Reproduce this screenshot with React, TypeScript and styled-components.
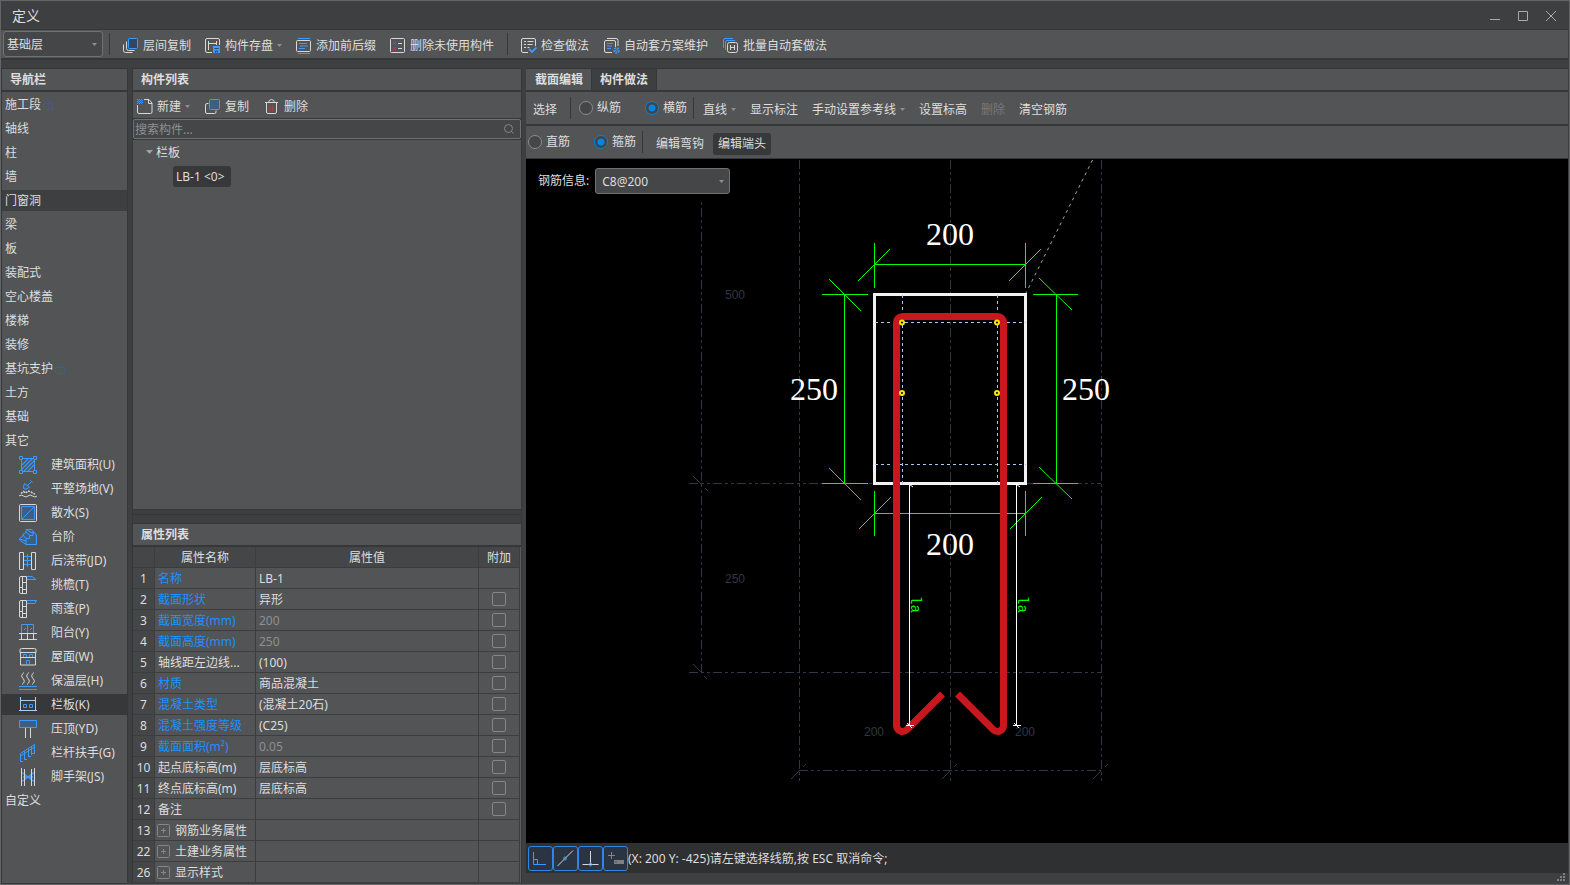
import React, { useState } from 'react';
import styled, { createGlobalStyle, css } from 'styled-components';

const color = {
  frame: '#636465',
  chrome: '#3e3f41',
  panel: '#525456',
  line: '#363739',
  cellLine: '#3c3d3f',
  head: '#454648',
  text: '#dedede',
  dim: '#8f9091',
  off: '#77787a',
  blue: '#1e90ff',
  icon: '#3d9bff',
  pale: '#d8d8d8',
  edge: '#707172',
  dark: '#37383a',
  grid: '#2f3845',
  green: '#00ff00',
  rebar: '#c8181e',
};

const GlobalStyle = createGlobalStyle`
  *, *::before, *::after { box-sizing: border-box; }
  body { margin: 0; background: ${color.chrome}; }
  body, button, input, select, table {
    font-family: "Noto Sans", "Noto Sans CJK SC", sans-serif;
    font-size: 12px;
    line-height: 16px;
    color: ${color.text};
  }
  button, input, select { margin: 0; }
`;

/* ---------- window frame ---------- */

const Window = styled.div`
  display: flex;
  flex-direction: column;
  height: 100vh;
  min-height: 820px;
  border: 1px solid ${color.frame};
  background: ${color.chrome};
`;

const TitleBar = styled.header`
  display: flex;
  justify-content: space-between;
  align-items: center;
  height: 29px;
  flex: none;
  padding: 2px 10px 0 11px;
  border-bottom: 1px solid ${color.line};
`;

const Title = styled.h1`
  margin: 0;
  font-size: 14px;
  line-height: 20px;
  font-weight: 400;
`;

const WindowButtons = styled.div`
  display: flex;
  gap: 12px;
`;

const WindowButton = styled.button`
  display: grid;
  place-items: center;
  width: 16px;
  height: 16px;
  padding: 0;
  border: 0;
  background: none;
`;

const barFace = css`
  display: flex;
  align-items: center;
  flex: none;
  background: ${color.panel};
  border-bottom: 2px solid ${color.line};
`;

const MainToolbar = styled.div`
  ${barFace}
  height: 30px;
  padding: 0 2px;
  margin-right: 1px;
`;

const Workspace = styled.main`
  flex: 1;
  min-height: 0;
  display: flex;
  padding: 8px 0 0 1px;
`;

const PanelHeader = styled.h2`
  ${barFace}
  height: 24px;
  margin: 0;
  padding: 0 8px;
  border-top: 1px solid ${color.line};
  font-size: 12px;
  font-weight: 700;
`;

/* ---------- controls ---------- */

const ToolGroup = styled.div<{ $gap?: number }>`
  display: flex;
  flex: none;
  gap: ${(p) => p.$gap || 0}px;
  padding-top: 4px;
`;

const Tool = styled.button<{ $pressed?: boolean }>`
  display: inline-flex;
  align-items: center;
  gap: 4px;
  flex: none;
  height: 22px;
  padding: 0 ${(p) => (p.$pressed ? 5 : 7)}px;
  border: 0;
  border-radius: 3px;
  white-space: nowrap;
  background: ${(p) => (p.$pressed ? color.dark : 'transparent')};
  &:disabled { color: ${color.off}; }
  svg { flex: none; }
`;

const Divider = styled.span<{ $tight?: boolean }>`
  flex: none;
  width: 1px;
  height: 22px;
  margin: 0 ${(p) => (p.$tight ? 2 : 6)}px 0 6px;
  background: ${color.dark};
`;

const SelectBox = styled.span<{ $width: number }>`
  position: relative;
  display: inline-flex;
  flex: none;
  width: ${(p) => p.$width}px;
  select {
    appearance: none;
    width: 100%;
    height: 26px;
    padding: 1px 20px 0 ${(p) => (p.$width > 110 ? 6 : 3)}px;
    border: 1px solid ${color.edge};
    border-radius: 3px;
    background: ${color.head};
  }
  svg {
    position: absolute;
    right: 6px;
    top: 12px;
    pointer-events: none;
  }
`;

const RadioGroup = styled.div`
  display: flex;
  flex: none;
  padding-left: 2px;
`;

const RadioLabel = styled.label`
  display: flex;
  align-items: center;
  gap: 4px;
  width: 66px;
  flex: none;
  padding-bottom: 1px;
  white-space: nowrap;
  &:last-child { width: auto; }
`;

const Radio = styled.input`
  appearance: none;
  width: 14px;
  height: 14px;
  border: 1px solid #8a8b8c;
  border-radius: 50%;
  background: ${color.head};
  &:checked {
    border-color: #0d7fd4;
    background: radial-gradient(circle, #0a84dc 3px, #3f4448 4px);
  }
`;

const Check = styled.input`
  appearance: none;
  display: block;
  width: 14px;
  height: 14px;
  margin: 0 auto;
  border: 1px solid #858687;
  border-radius: 2px;
  &:checked { background: ${color.blue}; }
`;

/* ---------- navigation ---------- */

const NavPanel = styled.nav`
  display: flex;
  flex-direction: column;
  width: 125px;
  flex: none;
  margin-bottom: 1px;
  background: ${color.panel};
  box-shadow: 1px 0 0 ${color.line}, -1px 0 0 ${color.line}, 0 1px 0 ${color.line};
`;

const NavList = styled.ul`
  display: flex;
  flex-direction: column;
  gap: 3px;
  margin: 0;
  padding: 2px 0 0;
  list-style: none;
`;

const NavItem = styled.button<{ $child?: boolean; $tone?: string }>`
  display: flex;
  align-items: center;
  gap: ${(p) => (p.$child ? 14 : 2)}px;
  width: 100%;
  height: 21px;
  padding: 0 0 0 ${(p) => (p.$child ? 17 : 3)}px;
  border: 0;
  white-space: nowrap;
  text-align: left;
  background: ${(p) => p.$tone || 'transparent'};
  svg { flex: none; }
`;

/* ---------- component list and properties ---------- */

const MiddleColumn = styled.div`
  display: flex;
  flex-direction: column;
  width: 388px;
  flex: none;
  margin: 0 5px 0 6px;
  box-shadow: 1px 0 0 ${color.line}, -1px 0 0 ${color.line};
`;

const ListToolbar = styled.div`
  display: flex;
  align-items: center;
  flex: none;
  height: 27px;
  border-bottom: 1px solid ${color.line};
  background: ${color.panel};
  button:first-child { padding-left: 4px; }
`;

const SearchBox = styled.label`
  position: relative;
  display: block;
  flex: none;
  input {
    display: block;
    width: 100%;
    height: 20px;
    padding: 0 24px 0 1px;
    border: 1px solid ${color.edge};
    border-radius: 2px;
    background: ${color.head};
    &::placeholder { color: ${color.dim}; opacity: 1; }
  }
  svg {
    position: absolute;
    right: 6px;
    top: 4px;
  }
`;

const Tree = styled.ul`
  flex: 1;
  min-height: 40px;
  margin: 0 0 4px;
  padding: 2px 0 0 13px;
  list-style: none;
  border-top: 1px solid ${color.line};
  border-bottom: 1px solid ${color.line};
  background: ${color.panel};
  ul { margin: 3px 0 0; padding: 0 0 0 27px; list-style: none; }
`;

const TreeRow = styled.button<{ $selected?: boolean }>`
  display: flex;
  align-items: center;
  gap: 2px;
  height: 21px;
  padding: ${(p) => (p.$selected ? '0 6px 0 3px' : '0')};
  border: 0;
  border-radius: 3px;
  white-space: nowrap;
  background: ${(p) => (p.$selected ? color.dark : 'transparent')};
`;

const Properties = styled.section`
  flex: none;
  padding: 8px 0 1px;
  border-top: 1px solid ${color.line};
`;

const PropTable = styled.table`
  width: 100%;
  table-layout: fixed;
  border-spacing: 0;
  background: ${color.panel};
  border-right: 1px solid #5c5d5e;
  th, td {
    height: 21px;
    padding: 2px 3px 0;
    border: solid ${color.cellLine};
    border-width: 0 1px 1px 0;
    font-weight: 400;
    text-align: left;
    white-space: nowrap;
    overflow: hidden;
    text-overflow: ellipsis;
  }
  td:last-child { padding: 0; }
  thead th, tbody th { background: ${color.head}; text-align: center; padding: 2px 0 0; }
`;

const NameCell = styled.td<{ $blue?: boolean }>`
  color: ${(p) => (p.$blue ? color.blue : color.text)};
`;

const ValueCell = styled.td<{ $dim?: boolean }>`
  color: ${(p) => (p.$dim ? color.dim : color.text)};
`;

const Expander = styled.button`
  display: flex;
  align-items: center;
  gap: 5px;
  padding: 0;
  border: 0;
  background: none;
  svg { margin: 0 0 2px -1px; }
`;

/* ---------- section editor ---------- */

const Editor = styled.section`
  flex: 1;
  min-width: 0;
  display: flex;
  flex-direction: column;
  margin-right: 1px;
`;

const Tabs = styled.div`
  ${barFace}
  height: 24px;
  align-items: stretch;
  padding-left: 1px;
  border-top: 1px solid ${color.line};
`;

const Tab = styled.button<{ $dark?: boolean }>`
  width: 65px;
  padding: 0;
  border: 0;
  border-right: 1px solid ${color.line};
  font-weight: 700;
  background: ${(p) => (p.$dark ? color.chrome : 'transparent')};
`;

const EditorBar = styled.div<{ $last?: boolean }>`
  ${barFace}
  height: ${(p) => (p.$last ? 33 : 34)}px;
  border-bottom-width: ${(p) => (p.$last ? 1 : 2)}px;
`;

const Canvas = styled.div`
  position: relative;
  flex: 1;
  min-height: 0;
  overflow: hidden;
  background: #000;
  > svg { display: block; width: 100%; height: 100%; }
`;

const RebarInfo = styled.label`
  position: absolute;
  left: 4px;
  top: 1px;
  display: flex;
  align-items: center;
  gap: 6px;
  height: 39px;
  padding: 4px 2px 1px 8px;
  background: #000;
`;

const StatusBar = styled.footer`
  display: flex;
  align-items: center;
  flex: none;
  height: 30px;
  padding-left: 2px;
  background: #2f3032;
  span { padding-top: 2px; }
`;

const SnapButton = styled.button`
  display: grid;
  place-items: center;
  width: 25px;
  height: 25px;
  padding: 0;
  border: 1px solid #2f86ea;
  border-radius: 3px;
  background: #2a3442;
`;

const Grip = styled.div`
  display: flex;
  justify-content: flex-end;
  flex: none;
  height: 11px;
  padding-right: 2px;
`;

/* ---------- icons ---------- */

type IconProps = { size?: number; box?: number; children: React.ReactNode };
const Icon = ({ size = 16, box = size, children }: IconProps) => (
  <svg width={size} height={size} viewBox={`0 0 ${box} ${box}`} fill="none" stroke={color.pale} aria-hidden="true">
    {children}
  </svg>
);

const Arrow = () => (
  <svg width="5" height="4" viewBox="0 0 5 4" aria-hidden="true">
    <path d="M0 0h5L2.5 3z" fill="#8e8f90" />
  </svg>
);

const B = color.icon;
const FILL = '#3f5f82';

const icons: Record<string, React.ReactNode> = {
  layerCopy: (
    <Icon>
      <path d="M3.5 3.5v7q0 2 2 2h6M.5 6.5v6q0 2 2 2h7" />
      <rect x="5.5" y=".5" width="9" height="10" rx="1" stroke={B} fill="#2c4866" />
    </Icon>
  ),
  store: (
    <Icon>
      <path d="M7 14.5H2q-1.500 0-1.500-1.500V2Q.5.5 2 .5h11q1.500 0 1.500 1.500v5M3.500 3v9M3.500 5.500h8M11.500 3v4" />
      <path d="M8 8h7v7H8z" fill={B} stroke="none" />
      <path d="M9.500 10.500h4M10.500 14.500v-1.500h2v1.500" stroke="#2c4866" />
    </Icon>
  ),
  affix: (
    <Icon>
      <path d="M2 .5h12M2 15.500h12" stroke={B} />
      <rect x=".5" y="2.500" width="14" height="11" rx="1" />
      <path d="M3 5.500h8M4 8h8M3 10.500h6" stroke={B} />
    </Icon>
  ),
  removeUnused: (
    <Icon>
      <rect x=".5" y=".5" width="14" height="14" rx="1" />
      <path d="M3 4l3 3M6 4L3 7M3 9l3 3M6 9l-3 3" stroke="#e03030" />
      <path d="M8 5.500h4M8 10.500h4" />
    </Icon>
  ),
  check: (
    <Icon>
      <path d="M7 14.500H2q-1.500 0-1.500-1.500V2Q.5.5 2 .5h11q1.500 0 1.500 1.500v6M3 3.500h2M6.500 3.500h6M3 6.500h2M6.500 6.500h5M3 9.500h2M6.500 9.500h2" />
      <path d="M8 11l3 3 4.500-4.500" stroke={B} strokeWidth="1.800" />
    </Icon>
  ),
  scheme: (
    <Icon>
      <path d="M8 14.500H2q-1.500 0-1.500-1.500V4Q.5 2.500 2 2.500h8q1.500 0 1.500 1.500v5M3 .5h9q2 0 2 2V8" />
      <path d="M3 5.500h6M3 8h5M3 10.500h4" stroke={B} />
      <circle cx="12.500" cy="12.500" r="2.500" stroke={B} strokeWidth="1.500" strokeDasharray="2 1" />
      <circle cx="12.500" cy="12.500" r="1" stroke={B} />
    </Icon>
  ),
  batch: (
    <Icon>
      <path d="M.5 10V2Q.5.5 2 .5h8M2.500 12V4q0-1.500 1.500-1.500h8" stroke={B} />
      <rect x="4.500" y="4.500" width="10" height="10" rx="2" />
      <path d="M7.500 7v5M11.500 7v5M7.500 9.500h4" />
    </Icon>
  ),
  create: (
    <Icon>
      <path d="M7 .5h5L15 4v9q0 1.500-1.500 1.500H2Q.5 14.500.5 13V6M11.500.5v4H15" />
      <path d="M0 .5h5M0 2.500h5M0 4.500h5" stroke={B} strokeDasharray="1 1" />
      <path d="M1 1.500h5M1 3.500h5" stroke={B} strokeDasharray="1 1" />
    </Icon>
  ),
  copy: (
    <Icon>
      <path d="M3.500 4.500H2Q.5 4.500.5 6v7q0 1.500 1.500 1.500h7.500q1.500 0 1.500-1.500v-1.500" />
      <rect x="4.500" y=".5" width="10" height="10" rx="1" stroke={B} fill={FILL} />
    </Icon>
  ),
  trash: (
    <Icon>
      <path d="M1 3.500h13M4.500 3.500Q5 .5 7.500.5t3 3M2.500 3.500V13q0 1.500 1.500 1.500h7q1.500 0 1.500-1.500V3.500" />
      <path d="M6 6.500v6M9 6.500v6" stroke="#e03030" />
    </Icon>
  ),
  lock: (
    <Icon size={10}>
      <path d="M.5 3.500h9v6h-9zM2.500 3V2Q2.500.5 5 .5T7.500 2v1M4 6.500h2" stroke="#445c80" />
    </Icon>
  ),
  area: (
    <Icon size={18}>
      <path d="M2.500 2.500h13v13h-13z" stroke={B} />
      <path d="M3 9l6-6M3 13L13 3M5 15L15 5M9 15l6-6" stroke={B} strokeWidth="1.200" />
      <path d="M.5.5h3v3h-3zM14.500.5h3v3h-3zM.5 14.500h3v3h-3zM14.500 14.500h3v3h-3z" stroke={B} fill={color.panel} />
    </Icon>
  ),
  site: (
    <Icon size={18}>
      <path d="M11.500.500l2 2M12.500 1.500L8 6M5.500 3.500Q3.500 7 5 9q3 1 5.500-2z" stroke={B} fill={FILL} />
      <path d="M2 13.500l2.500-2 2 1.500L9 11l3 1 2 1.500 2 .5" strokeWidth="1.500" strokeDasharray="2 1" />
      <path d="M0 16q2-2 4.500 0t4.500 0 4.500 0 4.500 0" />
    </Icon>
  ),
  apron: (
    <Icon size={18}>
      <rect x=".5" y=".5" width="17" height="17" rx="1" />
      <path d="M2.500 2.500h13v13h-13z" stroke={B} fill={FILL} />
      <path d="M3 15L15 3" stroke={B} />
    </Icon>
  ),
  steps: (
    <Icon size={18}>
      <path d="M.5 10.500L4 8V6l3-1.500v-3h5.500L17.500 7v9.500H7L.5 12z" stroke={B} fill={FILL} />
      <path d="M4 7l3 3.500h3.500V7.500M7 4l4 3.500h3V4.500M1 11l6 2v3.500M7 10.500V13M7.500 1.500L12 4.500h2.500" stroke={B} />
    </Icon>
  ),
  strip: (
    <Icon size={18}>
      <path d="M4 4.500h9M4 8.500h9M4 12.500h9M8.500 2v13" stroke={B} />
      <path d="M.5.500h4v17h-4zM12.500.500h4v17h-4z" fill={color.panel} />
    </Icon>
  ),
  eaves: (
    <Icon size={18}>
      <path d="M7.500.500H2Q.5.500.500 2v14q0 1.500 1.500 1.500h5.500zM3.500 1v16M3.500 6.500h4M.5 11.500h3M3.500 13.500h4" />
      <path d="M8 .5h5l4 3H8" stroke={B} fill={FILL} />
    </Icon>
  ),
  canopy: (
    <Icon size={18}>
      <path d="M7.500.500H2Q.5.500.500 2v14q0 1.500 1.500 1.500h5.500zM3.500 1v16M3.500 6.500h4M.5 11.500h3M3.500 13.500h4" />
      <path d="M8 .5h9.500l-1.500 3H8" stroke={B} fill={FILL} />
    </Icon>
  ),
  balcony: (
    <Icon size={18}>
      <path d="M2.500 9V.5h12V9M8.500.500V9M5 6l2-2M11 6l2-2" stroke={B} />
      <path d="M0 9.500h18M2.500 9.500v6M8.500 9.500v6M14.500 9.500v6M0 15.500h18" />
    </Icon>
  ),
  roof: (
    <Icon size={18}>
      <path d="M2.500.500h13q1.500 0 1.500 1.500v2.500H1V2Q1 .5 2.500.5zM1.500 5v12h15V5M1.500 9.500h15" />
      <path d="M4.500 9v-2.500h3V9M10.500 9v-2.500h3V9M7.500 16.500v-4h3v4" stroke={B} />
    </Icon>
  ),
  insulation: (
    <Icon size={18}>
      <path d="M5 .5q-4 3-1 6t-1 6M10 .5q-4 3-1 6t-1 6M15 .5q-4 3-1 6t-1 6" />
      <path d="M0 14.500h18M0 17.500h18" stroke={B} />
    </Icon>
  ),
  railBoard: (
    <Icon size={18}>
      <path d="M1.500 1v14M16.500 1v14M1.500 4.500h15M0 14.500h18" stroke="#a9cdf5" />
      <path d="M4.500 8.500h3v3h-3zM10.500 8.500h3v3h-3z" stroke={B} />
    </Icon>
  ),
  coping: (
    <Icon size={18}>
      <path d="M.5.500h17v7H.5z" stroke={B} fill={FILL} />
      <path d="M6.500 8v10M11.500 8v10" />
    </Icon>
  ),
  handrail: (
    <Icon size={18}>
      <path d="M1.500 17V9.500L15.500.500V9M1.500 12l14-9M5.500 15V7M9.500 13V5M12.500 11V3M1 17.500h3M5 15.500h3M9 12.500h3M13 9.500h3" stroke={B} />
    </Icon>
  ),
  scaffold: (
    <Icon size={18}>
      <path d="M3 4.500l12 9M15 4.500l-12 9M4 9h10" stroke={B} strokeWidth="1.500" />
      <path d="M2.500 0v18M5.500 1v17M12.500 1v17M15.500 0v18" />
    </Icon>
  ),
};

/* ---------- data ---------- */

const floorTools = [
  { icon: 'layerCopy', label: '层间复制' },
  { icon: 'store', label: '构件存盘', menu: true },
  { icon: 'affix', label: '添加前后缀' },
  { icon: 'removeUnused', label: '删除未使用构件' },
];

const methodTools = [
  { icon: 'check', label: '检查做法' },
  { icon: 'scheme', label: '自动套方案维护' },
  { icon: 'batch', label: '批量自动套做法' },
];

const listTools = [
  { icon: 'create', label: '新建', menu: true },
  { icon: 'copy', label: '复制' },
  { icon: 'trash', label: '删除' },
];

type NavEntry = { label: string; icon?: string; locked?: boolean; tone?: string };
const navEntries: NavEntry[] = [
  { label: '施工段', locked: true },
  { label: '轴线' },
  { label: '柱' },
  { label: '墙' },
  { label: '门窗洞', tone: color.chrome },
  { label: '梁' },
  { label: '板' },
  { label: '装配式' },
  { label: '空心楼盖' },
  { label: '楼梯' },
  { label: '装修' },
  { label: '基坑支护', locked: true },
  { label: '土方' },
  { label: '基础' },
  { label: '其它' },
  { label: '建筑面积(U)', icon: 'area' },
  { label: '平整场地(V)', icon: 'site' },
  { label: '散水(S)', icon: 'apron' },
  { label: '台阶', icon: 'steps' },
  { label: '后浇带(JD)', icon: 'strip' },
  { label: '挑檐(T)', icon: 'eaves' },
  { label: '雨蓬(P)', icon: 'canopy' },
  { label: '阳台(Y)', icon: 'balcony' },
  { label: '屋面(W)', icon: 'roof' },
  { label: '保温层(H)', icon: 'insulation' },
  { label: '栏板(K)', icon: 'railBoard', tone: color.dark },
  { label: '压顶(YD)', icon: 'coping' },
  { label: '栏杆扶手(G)', icon: 'handrail' },
  { label: '脚手架(JS)', icon: 'scaffold' },
  { label: '自定义' },
];

type Prop = { no: number; name: string; value?: string; blue?: boolean; dim?: boolean; check?: boolean; group?: boolean };
const props: Prop[] = [
  { no: 1, name: '名称', value: 'LB-1', blue: true },
  { no: 2, name: '截面形状', value: '异形', blue: true, check: true },
  { no: 3, name: '截面宽度(mm)', value: '200', blue: true, dim: true, check: true },
  { no: 4, name: '截面高度(mm)', value: '250', blue: true, dim: true, check: true },
  { no: 5, name: '轴线距左边线...', value: '(100)', check: true },
  { no: 6, name: '材质', value: '商品混凝土', blue: true, check: true },
  { no: 7, name: '混凝土类型', value: '(混凝土20石)', blue: true, check: true },
  { no: 8, name: '混凝土强度等级', value: '(C25)', blue: true, check: true },
  { no: 9, name: '截面面积(m²)', value: '0.05', blue: true, dim: true, check: true },
  { no: 10, name: '起点底标高(m)', value: '层底标高', check: true },
  { no: 11, name: '终点底标高(m)', value: '层底标高', check: true },
  { no: 12, name: '备注', check: true },
  { no: 13, name: '钢筋业务属性', group: true },
  { no: 22, name: '土建业务属性', group: true },
  { no: 26, name: '显示样式', group: true },
];

/* ---------- pieces ---------- */

const ToolList = ({ items, gap }: { items: { icon: string; label: string; menu?: boolean }[]; gap?: number }) => (
  <ToolGroup $gap={gap}>
    {items.map((t) => (
      <Tool key={t.label} type="button">
        {icons[t.icon]}
        {t.label}
        {t.menu && <Arrow />}
      </Tool>
    ))}
  </ToolGroup>
);

const RadioPair = ({ name, options }: { name: string; options: string[] }) => {
  const [picked, setPicked] = useState(options[1]);
  return (
    <RadioGroup>
      {options.map((o) => (
        <RadioLabel key={o}>
          <Radio type="radio" name={name} checked={picked === o} onChange={() => setPicked(o)} />
          {o}
        </RadioLabel>
      ))}
    </RadioGroup>
  );
};

/* Cross-section of the parapet with its stirrup, in drawing units of one pixel. */
const SectionDrawing = () => (
  <svg role="img" aria-label="栏板截面" fill="none">
    <g transform="translate(-526 -159)">
      <g stroke={color.grid} strokeDasharray="9 3 3 3 3 3" shapeRendering="crispEdges">
        <path d="M701.5 160V672M799.5 160V783M950.5 160V783M1101.5 160V783" />
        <path d="M689 483.5H1101M689 672.5H1101M799 770.5H1101" />
      </g>
      <path
        stroke={color.grid}
        d="M693 476l8 8M705 488l3 3M693 664l8 8M704 676l3 3M791 779l8-8M803 767l3-3M942 779l8-8M954 767l3-3M1093 779l8-8M1105 767l3-3"
      />
      <g fill={color.grid} fontFamily='"Liberation Sans", sans-serif' fontSize="12">
        <text x="725" y="299">500</text>
        <text x="725" y="583">250</text>
        <text x="864" y="736">200</text>
        <text x="1015" y="736">200</text>
      </g>
      <path d="M1092.500 160L1026 293" stroke="#a8a8a8" strokeDasharray="3 4" />
      <g stroke={color.green} shapeRendering="crispEdges">
        <path d="M874.5 243v45M1025.500 243v45M874 264.500h151" />
        <path d="M822 294.500h46M822 483.500h46M844.500 294v189" />
        <path d="M1033 294.500h45M1033 483.500h45M1056.500 294v189" />
        <path d="M874.500 491v45M1025.500 491v45M874 513.500h151" />
      </g>
      <path
        stroke={color.green}
        d="M858 281l32-32M1009 281l32-32M829 279l32 32M829 468l32 32M1039 278l33 32M1039 467l33 32M859 529l32-32M1010 529l32-32"
      />
      <rect x="874.500" y="294.500" width="151" height="189" stroke="#f2f2f2" strokeWidth="3" />
      <path
        stroke="#a9c8f0"
        strokeDasharray="3 3"
        shapeRendering="crispEdges"
        d="M902.500 295V484M997.500 295V484M875 322.500h151M875 464.500h151"
      />
      <path
        stroke={color.rebar}
        strokeWidth="7"
        d="M942.500 694L906.700 729.700A6 6 0 0 1 896.500 725.500V322.500A6 6 0 0 1 902.500 316.500H997.500A6 6 0 0 1 1003.500 322.500V725.500A6 6 0 0 1 993.300 729.700L957.500 694"
      />
      <path stroke="#fff" shapeRendering="crispEdges" d="M909.500 484V725M1016.500 484V725M906 725.500h8M1013 725.500h8M906 484.500h8M1013 484.500h8" />
      <path stroke="#fff" d="M907 723l5 5M1014 723l5 5M909 484l4 3M1016 484l4 3" />
      <g stroke="#ffe21a" strokeWidth="2" fill="#000">
        <circle cx="902" cy="322.500" r="2" />
        <circle cx="997" cy="322.500" r="2" />
        <circle cx="902" cy="393" r="2" />
        <circle cx="997" cy="393" r="2" />
      </g>
      <g fill="#fff" fontFamily='"Liberation Serif", serif' fontSize="32" textAnchor="middle">
        <text x="950" y="245">200</text>
        <text x="814" y="400">250</text>
        <text x="1086" y="400">250</text>
        <text x="950" y="555">200</text>
      </g>
      <g fill={color.green} fontFamily='"Liberation Mono", monospace' fontSize="14">
        <text transform="translate(911 596) rotate(90)">la</text>
        <text transform="translate(1018 596) rotate(90)">la</text>
      </g>
    </g>
  </svg>
);

const SnapIcon = ({ kind }: { kind: number }) => (
  <svg width="19" height="19" viewBox="0 0 19 19" fill="none" aria-hidden="true">
    {kind === 0 && <path d="M2.500 3v12.500H15M2.500 10.500h4v5" stroke={B} />}
    {kind === 1 && (
      <>
        <path d="M1.500 17L17 1.500" stroke="#d8d8d8" />
        <circle cx="9" cy="9.500" r="1.500" stroke={B} />
      </>
    )}
    {kind === 2 && (
      <>
        <path d="M9.500 2v13M1.500 15.500h16" stroke="#d8d8d8" />
        <circle cx="9.500" cy="15.500" r="1.500" stroke={B} />
      </>
    )}
    {kind === 3 && (
      <>
        <path d="M5.500 3v7M2 6.500h7" stroke="#85878a" />
        <path d="M8 11h10v4H8z" fill="#7d7f82" />
        <path d="M9.500 13h1" stroke="#2a3442" />
      </>
    )}
  </svg>
);

export default function App() {
  return (
    <>
      <GlobalStyle />
      <Window>
        <TitleBar>
          <Title>定义</Title>
          <WindowButtons>
            <WindowButton type="button" aria-label="最小化">
              <Icon size={12}><path d="M1 9.500h10" stroke="#a9a9a9" /></Icon>
            </WindowButton>
            <WindowButton type="button" aria-label="最大化">
              <Icon size={12}><path d="M1.500 1.500h9v9h-9z" stroke="#a9a9a9" /></Icon>
            </WindowButton>
            <WindowButton type="button" aria-label="关闭">
              <Icon size={12}><path d="M1 1l10 10M11 1L1 11" stroke="#a9a9a9" /></Icon>
            </WindowButton>
          </WindowButtons>
        </TitleBar>

        <MainToolbar>
          <SelectBox $width={100}>
            <select aria-label="楼层"><option>基础层</option></select>
            <Arrow />
          </SelectBox>
          <Divider />
          <ToolList items={floorTools} />
          <Divider />
          <ToolList items={methodTools} gap={1} />
        </MainToolbar>

        <Workspace>
          <NavPanel>
            <PanelHeader>导航栏</PanelHeader>
            <NavList>
              {navEntries.map((n) => (
                <li key={n.label}>
                  <NavItem type="button" $child={!!n.icon} $tone={n.tone}>
                    {n.icon && icons[n.icon]}
                    {n.label}
                    {n.locked && icons.lock}
                  </NavItem>
                </li>
              ))}
            </NavList>
          </NavPanel>

          <MiddleColumn>
            <PanelHeader>构件列表</PanelHeader>
            <ListToolbar><ToolList items={listTools} gap={1} /></ListToolbar>
            <SearchBox>
              <input type="text" aria-label="搜索构件" placeholder="搜索构件..." />
              <Icon size={12}>
                <circle cx="5.500" cy="5.500" r="4" stroke="#858687" />
                <path d="M8.500 8.500l2 2" stroke="#858687" />
              </Icon>
            </SearchBox>
            <Tree>
              <li>
                <TreeRow type="button">
                  <svg width="8" height="5" viewBox="0 0 8 5" aria-hidden="true"><path d="M0 0h7L3.500 4z" fill="#a0a1a2" /></svg>
                  栏板
                </TreeRow>
                <ul>
                  <li><TreeRow type="button" $selected>LB-1 &lt;0&gt;</TreeRow></li>
                </ul>
              </li>
            </Tree>
            <Properties>
              <PanelHeader>属性列表</PanelHeader>
              <PropTable>
                <colgroup>
                  <col style={{ width: 22 }} />
                  <col style={{ width: 101 }} />
                  <col />
                  <col style={{ width: 41 }} />
                </colgroup>
                <thead>
                  <tr>
                    <th aria-label="序号" />
                    <th>属性名称</th>
                    <th>属性值</th>
                    <th>附加</th>
                  </tr>
                </thead>
                <tbody>
                  {props.map((p) => (
                    <tr key={p.no}>
                      <th>{p.no}</th>
                      <NameCell $blue={p.blue}>
                        {p.group ? (
                          <Expander type="button">
                            <Icon size={13}>
                              <rect x=".5" y=".5" width="12" height="12" rx="1" stroke="#858687" />
                              <path d="M4 6.500h5M6.500 4v5" stroke="#858687" />
                            </Icon>
                            {p.name}
                          </Expander>
                        ) : (
                          p.name
                        )}
                      </NameCell>
                      <ValueCell $dim={p.dim}>{p.value}</ValueCell>
                      <td>{p.check && <Check type="checkbox" aria-label={`附加 ${p.name}`} />}</td>
                    </tr>
                  ))}
                </tbody>
              </PropTable>
            </Properties>
          </MiddleColumn>

          <Editor>
            <Tabs>
              <Tab type="button">截面编辑</Tab>
              <Tab type="button" $dark>构件做法</Tab>
            </Tabs>
            <EditorBar>
              <ToolGroup>
                <Tool type="button">选择</Tool>
              </ToolGroup>
              <Divider />
              <RadioPair name="direction" options={['纵筋', '横筋']} />
              <Divider $tight />
              <ToolGroup>
                <Tool type="button">直线<Arrow /></Tool>
                <Tool type="button">显示标注</Tool>
                <Tool type="button">手动设置参考线<Arrow /></Tool>
                <Tool type="button">设置标高</Tool>
                <Tool type="button" disabled>删除</Tool>
                <Tool type="button">清空钢筋</Tool>
              </ToolGroup>
            </EditorBar>
            <EditorBar $last>
              <RadioPair name="shape" options={['直筋', '箍筋']} />
              <Divider />
              <ToolGroup $gap={2}>
                <Tool type="button">编辑弯钩</Tool>
                <Tool type="button" $pressed>编辑端头</Tool>
              </ToolGroup>
            </EditorBar>
            <Canvas>
              <SectionDrawing />
              <RebarInfo>
                钢筋信息:
                <SelectBox $width={135}>
                  <select><option>C8@200</option></select>
                  <Arrow />
                </SelectBox>
              </RebarInfo>
            </Canvas>
            <StatusBar>
              {['正交', '对象捕捉', '垂点', '动态输入'].map((label, i) => (
                <SnapButton key={label} type="button" aria-label={label}><SnapIcon kind={i} /></SnapButton>
              ))}
              <span>(X: 200 Y: -425)请左键选择线筋,按 ESC 取消命令;</span>
            </StatusBar>
            <Grip>
              <svg width="9" height="9" aria-hidden="true">
                <path d="M6 0h2v2H6zM3 3h2v2H3zM6 3h2v2H6zM0 6h2v2H0zM3 6h2v2H3zM6 6h2v2H6z" fill="#7b8288" />
              </svg>
            </Grip>
          </Editor>
        </Workspace>
      </Window>
    </>
  );
}
